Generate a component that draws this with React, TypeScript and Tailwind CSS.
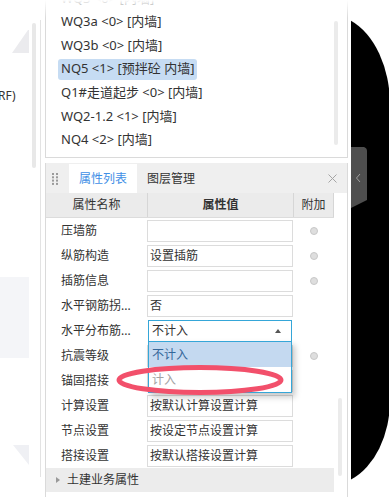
import React from 'react';

const listItems = [
  'WQ3 <0> [内墙]',
  'WQ3a <0> [内墙]',
  'WQ3b <0> [内墙]',
  'NQ5 <1> [预拌砼 内墙]',
  'Q1#走道起步 <0> [内墙]',
  'WQ2-1.2 <1> [内墙]',
  'NQ4 <2> [内墙]',
];

type Row = { label: string; value?: string; extra?: boolean; select?: boolean };

const rows: Row[] = [
  { label: '压墙筋', value: '', extra: true },
  { label: '纵筋构造', value: '设置插筋', extra: true },
  { label: '插筋信息', value: '', extra: true },
  { label: '水平钢筋拐...', value: '否' },
  { label: '水平分布筋...', value: '不计入', select: true },
  { label: '抗震等级', value: '', extra: true },
  { label: '锚固搭接', value: '' },
  { label: '计算设置', value: '按默认计算设置计算' },
  { label: '节点设置', value: '按设定节点设置计算' },
  { label: '搭接设置', value: '按默认搭接设置计算' },
];

function LeftStrip() {
  return (
    <div className="flex w-[40px] shrink-0">
      <div className="flex w-[29px] flex-col">
        <svg className="mt-[30px]" width="29" height="23">
          <polygon points="28,0 12,23 29,23 29,0" fill="#ebebee" />
        </svg>
        <div className="-ml-[2px] mt-[35px] h-[16px] leading-[16px]">RF)</div>
        <div className="mt-[173px] h-[81px] w-[29px] bg-[#f4f5f8]" />
        <svg className="mt-[87px]" width="29" height="20">
          <polygon points="13,0 29,0 29,20" fill="#eff0f4" />
        </svg>
      </div>
      <div className="ml-[3px] mt-[23px] h-[145px] w-[4px] rounded-full bg-[#e8e8e8]" />
    </div>
  );
}

function Grip() {
  const dots = [];
  for (let r = 0; r < 4; r++) {
    for (let c = 0; c < 2; c++) {
      dots.push(<rect key={`${r}-${c}`} x={c * 4} y={r * 3.3} width="2" height="2" fill="#9a9a9a" />);
    }
  }
  return (
    <svg width="6" height="12" className="shrink-0">
      {dots}
    </svg>
  );
}

function Dot() {
  return <span className="h-[8px] w-[8px] rounded-full border border-[#c8c8c8] bg-[#dedede]" />;
}

function PropertyTable() {
  return (
    <div className="flex">
      <div className="w-[288px]">
        <div className="grid h-[25px] grid-cols-[101px_146px_41px] border-b border-[#dcdcdc] bg-[#ebebeb]">
          <div className="flex items-center justify-center">属性名称</div>
          <div className="flex items-center justify-center border-l border-[#d6d6d6] font-bold">属性值</div>
          <div className="flex items-center justify-center border-x border-[#d6d6d6]">附加</div>
        </div>
        {rows.map((row) => (
          <div key={row.label} className="grid h-[25px] grid-cols-[101px_146px_41px]">
            <div className="flex items-center pl-[15px]">{row.label}</div>
            <div className="pt-[2px]">
              {row.select ? (
                <div className="relative ml-[1px] flex h-[22px] w-[144px] items-center border border-[#35a6d8] pl-[3px]">
                  <span className="flex-1">{row.value}</span>
                  <svg width="6" height="4" className="mr-[10px]">
                    <polygon points="0,4 3,0 6,4" fill="#555" />
                  </svg>
                  <div className="absolute left-[-1px] right-[-1px] top-[20px] z-10 flex h-[52px] flex-col border border-[#35a6d8] bg-white shadow-[3px_4px_6px_rgba(0,0,0,0.22)]">
                    <div className="flex h-[25px] items-center bg-[#c4d9f0] pl-[3px] text-[#34679a]">不计入</div>
                    <div className="flex h-[25px] items-center pl-[3px] text-[#a3a3a3]">计入</div>
                  </div>
                </div>
              ) : (
                <div className="flex h-[22px] items-center border border-[#dcdcdc] pl-[2px]">{row.value}</div>
              )}
            </div>
            <div className="flex items-center justify-center">{row.extra && <Dot />}</div>
          </div>
        ))}
        <div className="flex h-[24px] items-center bg-[#ececec] pl-[10px]">
          <svg width="4" height="6" className="mr-[7px]">
            <polygon points="0,0 4,3 0,6" fill="#999" />
          </svg>
          <span>土建业务属性</span>
        </div>
      </div>
      <div className="w-[13px]">
        <div className="ml-[4px] mt-[205px] h-[78px] w-[4px] rounded-full bg-[#ebebeb]" />
      </div>
    </div>
  );
}

function MainPanel() {
  return (
    <div className="flex w-[303px] shrink-0 flex-col">
      <div className="flex h-[158px] overflow-hidden border-x border-b border-[#dadada]">
        <div className="mt-[-13.4px] flex flex-1 flex-col pl-[12px] text-[13px]">
          {listItems.map((item) => (
            <div key={item} className="flex h-[23.6px] shrink-0 items-center">
              <span
                className={
                  item.startsWith('NQ5')
                    ? 'flex h-[21px] items-center whitespace-pre rounded-[3px] bg-[#c6dcf3] px-[3px]'
                    : 'flex h-[21px] items-center whitespace-pre px-[3px]'
                }
              >
                {item}
              </span>
            </div>
          ))}
        </div>
        <div className="mr-[9px] w-[4px]">
          <div className="mt-[21px] h-[124px] w-[4px] rounded-full bg-[#ebebeb]" />
        </div>
      </div>
      <div className="h-[5px]" />
      <div className="flex flex-1 flex-col border-x border-[#dadada]">
        <div className="flex h-[30px] items-end bg-[#efefef] pl-[6px] pr-[10px]">
          <div className="flex h-[29px] items-center">
            <Grip />
          </div>
          <div className="ml-[11px] flex h-[29px] w-[68px] items-center justify-center bg-white text-[#3f8fe6]">
            属性列表
          </div>
          <div className="ml-[10px] flex h-[29px] items-center">图层管理</div>
          <div className="flex h-[29px] flex-1 items-center justify-end">
            <svg width="9" height="9">
              <path d="M0.5 0.5 L8.5 8.5 M8.5 0.5 L0.5 8.5" stroke="#a5a5a5" strokeWidth="1" />
            </svg>
          </div>
        </div>
        <PropertyTable />
      </div>
    </div>
  );
}

function BlackEdge() {
  return (
    <div className="w-[38px] shrink-0">
      <svg width="38" height="497">
        <path d="M0 20.7 A60 90 0 0 1 39 105 L39 400 A60 85 0 0 1 0 479.6 Z" fill="#000" />
        <path d="M0 147 L13 147 Q16 148 16 151 L16 200 L0 208 Z" fill="#4e4e4e" />
        <polyline points="9,174 5.5,178 9,182" fill="none" stroke="#a0a0a0" strokeWidth="1" />
      </svg>
    </div>
  );
}

export default function App() {
  return (
    <div className="relative flex h-[497px] w-[389px] overflow-hidden bg-white font-['Noto_Sans','Noto_Sans_CJK_SC',sans-serif] text-[12px] text-[#333]">
      <LeftStrip />
      <div className="mt-[20px] h-[457px] w-px shrink-0 bg-[#e3e3e3]" />
      <div className="w-[4px] shrink-0" />
      <MainPanel />
      <div className="w-[3px] shrink-0" />
      <BlackEdge />
      <div className="pointer-events-none absolute inset-x-0 top-0 h-[18px] bg-gradient-to-b from-white to-white/0" />
      <svg className="pointer-events-none absolute left-[114px] top-[363px] z-20" width="172" height="34">
        <ellipse cx="86" cy="17" rx="81" ry="12.5" fill="none" stroke="#f2506b" strokeWidth="5" />
      </svg>
    </div>
  );
}
